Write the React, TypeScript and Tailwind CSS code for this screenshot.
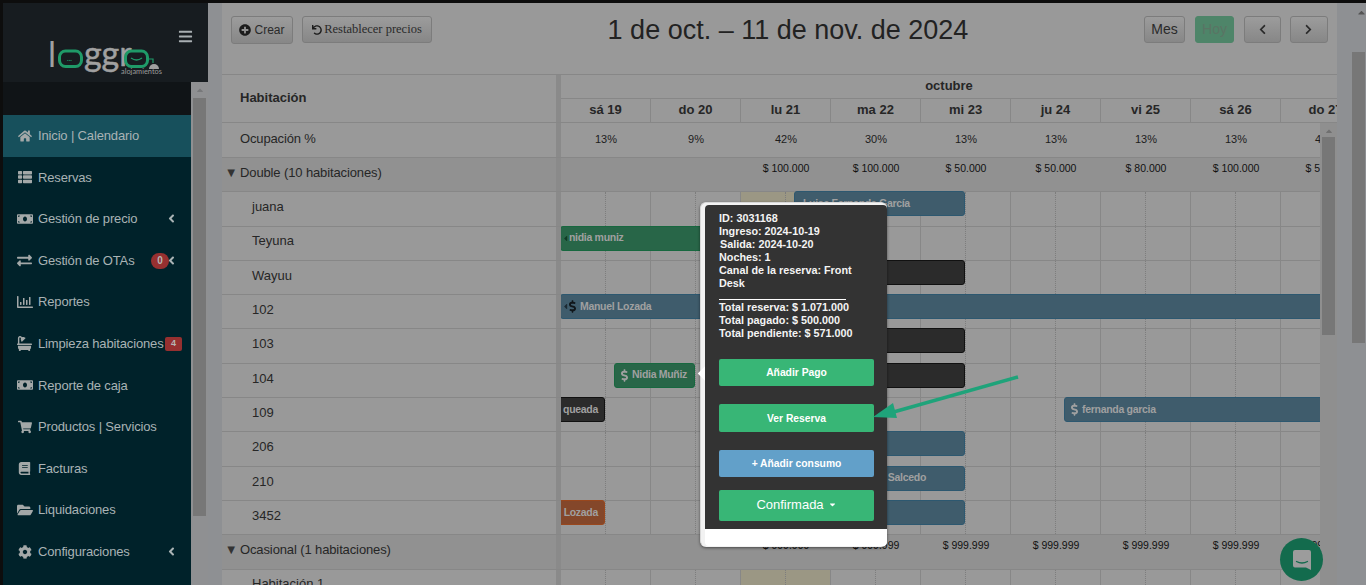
import type { ReactNode } from "react";
import {
	FaAngleLeft,
	FaBars,
	FaBath,
	FaBook,
	FaCaretDown,
	FaCaretLeft,
	FaCaretUp,
	FaChevronLeft,
	FaChevronRight,
	FaCog,
	FaDollarSign,
	FaExchangeAlt,
	FaFolderOpen,
	FaHome,
	FaMoneyBill,
	FaPlusCircle,
	FaRegChartBar,
	FaShoppingCart,
	FaThList,
	FaUndo,
} from "react-icons/fa";

const menu = [
	{ label: "Inicio | Calendario", icon: <FaHome size={14} />, active: true },
	{ label: "Reservas", icon: <FaThList size={14} /> },
	{ label: "Gestión de precio", icon: <FaMoneyBill size={16} />, caret: true },
	{ label: "Gestión de OTAs", icon: <FaExchangeAlt size={15} />, caret: true, pill: "0" },
	{ label: "Reportes", icon: <FaRegChartBar size={16} /> },
	{ label: "Limpieza habitaciones", icon: <FaBath size={15} />, tag: "4" },
	{ label: "Reporte de caja", icon: <FaMoneyBill size={16} /> },
	{ label: "Productos | Servicios", icon: <FaShoppingCart size={14} /> },
	{ label: "Facturas", icon: <FaBook size={13} /> },
	{ label: "Liquidaciones", icon: <FaFolderOpen size={16} /> },
	{ label: "Configuraciones", icon: <FaCog size={14} />, caret: true },
];

const days = ["sá 19", "do 20", "lu 21", "ma 22", "mi 23", "ju 24", "vi 25", "sá 26", "do 27"];
const occupancy = ["13%", "9%", "42%", "30%", "13%", "13%", "13%", "13%", "42%"];
const doublePrices = ["", "", "$ 100.000", "$ 100.000", "$ 50.000", "$ 50.000", "$ 80.000", "$ 100.000", "$ 50.000"];
const casualPrices = ["", "", "$ 999.999", "$ 999.999", "$ 999.999", "$ 999.999", "$ 999.999", "$ 999.999", "$ 999.999"];

function Sidebar() {
	return (
		<aside className="flex w-[205px] shrink-0 flex-col bg-[#00222a]">
			<div className="relative h-[79px] bg-[#171c20]">
				<svg width="130" height="64" viewBox="0 0 130 64" className="absolute left-[40px] top-[15px]">
					<text x="5" y="49" fontFamily="Lato" fontSize="34" fill="#a0a0a0">
						l
					</text>
					<rect x="16.500" y="33" width="22" height="15.500" rx="6" fill="none" stroke="#1f9a68" strokeWidth="3" />
					<text x="24" y="43" fontFamily="Lato" fontWeight="700" fontSize="7" fill="#1f9a68">
						...
					</text>
					<text x="41" y="48" fontFamily="Lato" fontSize="34" fill="#a0a0a0" stroke="#a0a0a0" strokeWidth="0.500">
						ggr
					</text>
					<rect x="82.500" y="33" width="22" height="15.500" rx="6" fill="none" stroke="#1f9a68" strokeWidth="3" />
					<path d="M88 40q5.500 4 11 0" fill="none" stroke="#1f9a68" strokeWidth="1.400" />
					<path d="M105 41h5v4" fill="none" stroke="#1f9a68" strokeWidth="1.200" />
					<path d="M106 51a5 5 0 0 1 10 0z" fill="#a0a0a0" />
					<text x="78" y="56" fontFamily="Lato" fontSize="7.400" fill="#9a9a9a">
						alojamientos
					</text>
				</svg>
				<FaBars size={15} className="absolute left-[175px] top-[26px] text-[#a9afb2]" />
			</div>
			<div className="flex min-h-0 flex-1">
				<div className="flex min-w-0 flex-1 flex-col">
					<div className="h-[33px] shrink-0 bg-[#101417]" />
					{menu.map((item) => (
						<div
							key={item.label}
							className={`relative flex h-[41.600px] shrink-0 items-center text-[13px] tracking-[-0.15px]
								text-[#a9b3b5] ${item.active ? "bg-[#17505c]" : ""}`}
						>
							<span className="flex w-[35px] shrink-0 justify-center pl-[8px] text-[#a3a8a8]">{item.icon}</span>
							<span className="whitespace-nowrap">{item.label}</span>
							{item.pill && (
								<span
									className="absolute left-[148px] flex h-[16px] w-[18px] items-center justify-center rounded-full
										bg-[#963030] text-[10px] font-bold text-[#b5b5b5]"
								>
									{item.pill}
								</span>
							)}
							{item.tag && (
								<span
									className="absolute left-[162px] flex h-[14px] w-[17px] items-center justify-center rounded-[2px]
										bg-[#963030] text-[9px] font-bold text-[#b5b5b5]"
								>
									{item.tag}
								</span>
							)}
							{item.caret && <FaAngleLeft size={13} className="absolute left-[162px] text-[#a9b3b5]" />}
						</div>
					))}
				</div>
				<div className="flex w-[17px] shrink-0 flex-col items-center bg-[#8f9092]">
					<FaCaretUp size={10} className="mt-[3px] text-[#77787a]" />
					<div className="mt-[3px] h-[418px] w-[13px] bg-[#777777]" />
				</div>
			</div>
		</aside>
	);
}

function ToolButton({ children, className = "" }: { children: ReactNode; className?: string }) {
	return (
		<button
			className={`flex h-[27px] items-center justify-center rounded-[3px] border border-[#7c7c7c]
				bg-gradient-to-b from-[#9c9c9c] to-[#878787] text-[#2a2a2a] ${className}`}
		>
			{children}
		</button>
	);
}

function Toolbar() {
	return (
		<div className="flex h-[72px] shrink-0 items-start justify-between border-b border-[#878787] pl-[9px] pr-[9px] pt-[13px]">
			<div className="flex gap-[9px]">
				<ToolButton className="h-[28px] w-[62px] gap-[3px] text-[12px]">
					<FaPlusCircle size={12} className="text-[#1c1c1c]" />
					Crear
				</ToolButton>
				<ToolButton className="w-[130px] gap-[2px] font-['Liberation_Serif',serif] text-[12.500px]">
					<FaUndo size={10} className="text-[#1c1c1c]" />
					Restablecer precios
				</ToolButton>
			</div>
			<h2 className="whitespace-nowrap text-[27px] leading-[28px] text-[#222222]">1 de oct. – 11 de nov. de 2024</h2>
			<div className="flex gap-[10px] text-[14px]">
				<ToolButton className="w-[41px]">Mes</ToolButton>
				<button className="flex h-[27px] w-[39px] items-center justify-center rounded-[3px] border border-[#4e8569] bg-[#4e8569] text-[#5a7464]">
					Hoy
				</button>
				<ToolButton className="w-[37px]">
					<FaChevronLeft size={11} />
				</ToolButton>
				<ToolButton className="ml-[-1px] w-[38px]">
					<FaChevronRight size={11} />
				</ToolButton>
			</div>
		</div>
	);
}

function HeaderRows() {
	return (
		<div className="flex h-[48px] shrink-0 border-b border-[#878787] text-[#262626]">
			<div className="flex w-[334px] shrink-0 items-center pb-[2px] pl-[18px] text-[13px] font-bold">Habitación</div>
			<div className="w-[5px] shrink-0 bg-[#8a8a8a]" />
			<div className="flex min-w-0 flex-1 flex-col overflow-hidden text-[13px] font-bold">
				<div className="flex h-[24px] shrink-0 items-center justify-center border-b border-[#878787] pb-[2px]">octubre</div>
				<div className="flex flex-1">
					{days.map((day) => (
						<div key={day} className="flex w-[90px] shrink-0 items-center justify-center border-r border-[#878787] pb-[2px]">
							{day}
						</div>
					))}
				</div>
			</div>
		</div>
	);
}

function OccupancyRow() {
	return (
		<div className="flex h-[35px] shrink-0 border-b border-[#878787]">
			<div className="flex w-[334px] shrink-0 items-center pb-[2px] pl-[18px] text-[13px] tracking-[-0.15px] text-[#262626]">
				Ocupación %
			</div>
			<div className="w-[5px] shrink-0 bg-[#8a8a8a]" />
			<div className="flex min-w-0 flex-1 overflow-hidden">
				{occupancy.map((value, i) => (
					<div key={i} className="flex w-[90px] shrink-0 items-center justify-center pb-[2px] text-[11px] text-[#1c1c1c]">
						{value}
					</div>
				))}
			</div>
		</div>
	);
}

function GroupRow({ title, prices }: { title: string; prices: string[] }) {
	return (
		<div className="flex h-[34.300px] shrink-0 border-b border-[#878787] bg-[#919191]">
			<div className="flex w-[334px] shrink-0 items-center pb-[4px] text-[13px] tracking-[-0.12px] text-[#262626]">
				<span className="w-[18px] shrink-0 text-center text-[13px] text-[#333333]">▼</span>
				{title}
			</div>
			<div className="w-[5px] shrink-0 bg-[#8a8a8a]" />
			<div className="flex min-w-0 flex-1 overflow-hidden">
				{prices.map((price, i) => (
					<div key={i} className="flex h-[22px] w-[90px] shrink-0 items-center justify-center text-[10.500px] text-[#111111]">
						{price}
					</div>
				))}
			</div>
		</div>
	);
}

function Bar({
	left,
	width,
	color,
	children,
}: {
	left: number;
	width: number;
	color: "blue" | "green" | "dark" | "orange";
	children?: ReactNode;
}) {
	const colors = {
		blue: "bg-[#3f5c6c] border-[#2d5870]",
		green: "bg-[#286648] border-[#17683f]",
		dark: "bg-[#2b2b2b] border-[#111111]",
		orange: "bg-[#84472a] border-[#99471d]",
	};
	return (
		<div
			className={`absolute top-[-1px] flex h-[25px] items-center gap-[4px] whitespace-nowrap rounded-[3px] border px-[6px]
				text-[10.500px] font-bold tracking-[-0.3px] text-[#a0a0a0] ${colors[color]}`}
			style={{ left, width }}
		>
			{children}
		</div>
	);
}

function Dollar({ className = "" }: { className?: string }) {
	return <FaDollarSign className={`h-[13px] w-[7px] shrink-0 ${className}`} />;
}

function RoomRow({ name, children }: { name: string; children?: ReactNode }) {
	return (
		<div className="flex h-[34.300px] shrink-0 border-b border-[#878787]">
			<div className="flex w-[334px] shrink-0 items-center pb-[4px] pl-[30px] text-[13px] text-[#262626]">{name}</div>
			<div className="w-[5px] shrink-0 bg-[#8a8a8a]" />
			<div className="relative flex min-w-0 flex-1 overflow-x-clip">
				{days.map((day, i) => (
					<div
						key={day}
						className={`flex w-[90px] shrink-0 border-r border-[#878787] ${i === 2 ? "bg-[#9b9784]" : ""}`}
					>
						<div className="w-[45px] border-r border-dotted border-[#7d7d7d]" />
					</div>
				))}
				{children}
			</div>
		</div>
	);
}

function Calendar() {
	return (
		<div className="flex min-h-0 flex-1">
			<div className="flex w-[1098px] shrink-0 flex-col overflow-hidden">
				<OccupancyRow />
				<GroupRow title="Double (10 habitaciones)" prices={doublePrices} />
				<RoomRow name="juana">
					<Bar left={233} width={171} color="blue">
						<span className="pl-[2px]">Luisa Fernanda García</span>
					</Bar>
				</RoomRow>
				<RoomRow name="Teyuna">
					<Bar left={-1} width={300} color="green">
						<FaCaretLeft size={9} className="ml-[-6px] mr-[-5px] shrink-0 text-[#123a26]" />
						nidia muniz
					</Bar>
				</RoomRow>
				<RoomRow name="Wayuu">
					<Bar left={250} width={154} color="dark" />
				</RoomRow>
				<RoomRow name="102">
					<Bar left={-1} width={780} color="blue">
						<FaCaretLeft size={9} className="ml-[-6px] mr-[-5px] shrink-0 text-[#1c2a33]" />
						<Dollar className="text-[#10161a]" />
						Manuel Lozada
					</Bar>
				</RoomRow>
				<RoomRow name="103">
					<Bar left={250} width={154} color="dark" />
				</RoomRow>
				<RoomRow name="104">
					<Bar left={53} width={81} color="green">
						<Dollar />
						Nidia Muñiz
					</Bar>
					<Bar left={250} width={154} color="dark" />
				</RoomRow>
				<RoomRow name="109">
					<Bar left={-46} width={90} color="dark">
						<span className="ml-auto">queada</span>
					</Bar>
					<Bar left={503} width={300} color="blue">
						<Dollar />
						fernanda garcia
					</Bar>
				</RoomRow>
				<RoomRow name="206">
					<Bar left={250} width={154} color="blue" />
				</RoomRow>
				<RoomRow name="210">
					<Bar left={250} width={154} color="blue">
						<span className="ml-auto pr-[32px]">Salcedo</span>
					</Bar>
				</RoomRow>
				<RoomRow name="3452">
					<Bar left={-46} width={90} color="orange">
						<span className="ml-auto">Lozada</span>
					</Bar>
					<Bar left={250} width={154} color="blue" />
				</RoomRow>
				<GroupRow title="Ocasional (1 habitaciones)" prices={casualPrices} />
				<RoomRow name="Habitación 1" />
			</div>
			<div className="flex w-[17px] shrink-0 flex-col items-center bg-[#8f8f8f]">
				<FaCaretUp size={10} className="mt-[3px] text-[#707070]" />
				<div className="mt-[1px] h-[198px] w-[13px] bg-[#777777]" />
			</div>
		</div>
	);
}

function ActionButton({ children, className }: { children: ReactNode; className: string }) {
	return (
		<button className={`flex w-[155px] items-center justify-center rounded-[2px] text-[10.300px] font-bold text-white ${className}`}>
			{children}
		</button>
	);
}

function BookingPopover() {
	return (
		<div className="absolute left-[700px] top-[202px] h-[345px] w-[187px] rounded-[6px] border-l border-t border-[#d8d8d8] bg-[#f2f2f2] pl-[4px] pt-[2px] shadow-[0_1px_3px_rgba(0,0,0,0.5)]">
			<div className="absolute left-[-1px] top-[165px] size-[11px] rotate-45 bg-white" />
			<div className="relative flex h-[341px] flex-col overflow-hidden rounded-[4px] bg-white">
				<div className="flex h-[324px] flex-col bg-[#333333] pl-[14px] pr-[13px] pt-[7px] text-[10.800px] font-bold leading-[13px] text-[#f4f4f4]">
					<div>ID: 3031168</div>
					<div>Ingreso: 2024-10-19</div>
					<div className="pl-px">Salida: 2024-10-20</div>
					<div>Noches: 1</div>
					<div className="w-[150px]">Canal de la reserva: Front Desk</div>
					<div className="mb-[1px] mt-[9px] h-px w-[127px] bg-white" />
					<div>Total reserva: $ 1.071.000</div>
					<div>Total pagado: $ 500.000</div>
					<div>Total pendiente: $ 571.000</div>
					<ActionButton className="mt-[19px] h-[27px] bg-[#38b676]">Añadir Pago</ActionButton>
					<ActionButton className="mt-[18px] h-[28px] bg-[#38b676]">Ver Reserva</ActionButton>
					<ActionButton className="mt-[18px] h-[27px] bg-[#62a0c9]">+ Añadir consumo</ActionButton>
					<ActionButton className="mt-[13px] h-[31px] gap-[4px] bg-[#38b676] pb-[2px] !text-[13px] !font-normal">
						Confirmada
						<FaCaretDown size={9} />
					</ActionButton>
				</div>
			</div>
		</div>
	);
}

function App() {
	return (
		<div className="relative flex h-[585px] w-[1366px] flex-col overflow-hidden bg-[#8e9093] font-['Liberation_Sans',Arial,sans-serif]">
			<div className="h-[3px] shrink-0 bg-[#0d0d0d]" />
			<div className="flex min-h-0 flex-1">
				<div className="w-[3px] shrink-0 bg-[#0d0d0d]" />
				<Sidebar />
				<div className="w-[14px] shrink-0" />
				<main className="flex w-[1115px] shrink-0 flex-col bg-[#999999]">
					<Toolbar />
					<HeaderRows />
					<Calendar />
				</main>
				<div className="relative w-[29px] shrink-0">
					<FaCaretUp size={11} className="absolute left-[19px] top-[4px] text-[#555555]" />
					<div className="absolute left-[15px] top-[49px] h-[291px] w-[13px] bg-[#777777]" />
				</div>
			</div>

			<BookingPopover />

			<svg width="152" height="52" viewBox="0 0 152 52" className="absolute left-[870px] top-[372px]">
				<path d="M148 5 20 41" stroke="#1fa37a" strokeWidth="3.500" fill="none" />
				<path d="M3 45 23 31 27 46z" fill="#1fa37a" />
			</svg>

			<div className="absolute left-[1280px] top-[538px] flex size-[43px] items-center justify-center rounded-full bg-[#136b4d]">
				<svg width="20" height="22" viewBox="0 0 20 22">
					<path d="M3 1h14a2 2 0 0 1 2 2v18l-5-2.500H3a2 2 0 0 1-2-2V3a2 2 0 0 1 2-2z" fill="#9c9c9c" />
					<path d="M4.500 12.500q5.500 3 11 0" fill="none" stroke="#136b4d" strokeWidth="1.300" strokeLinecap="round" />
				</svg>
			</div>
		</div>
	);
}

export default App;
